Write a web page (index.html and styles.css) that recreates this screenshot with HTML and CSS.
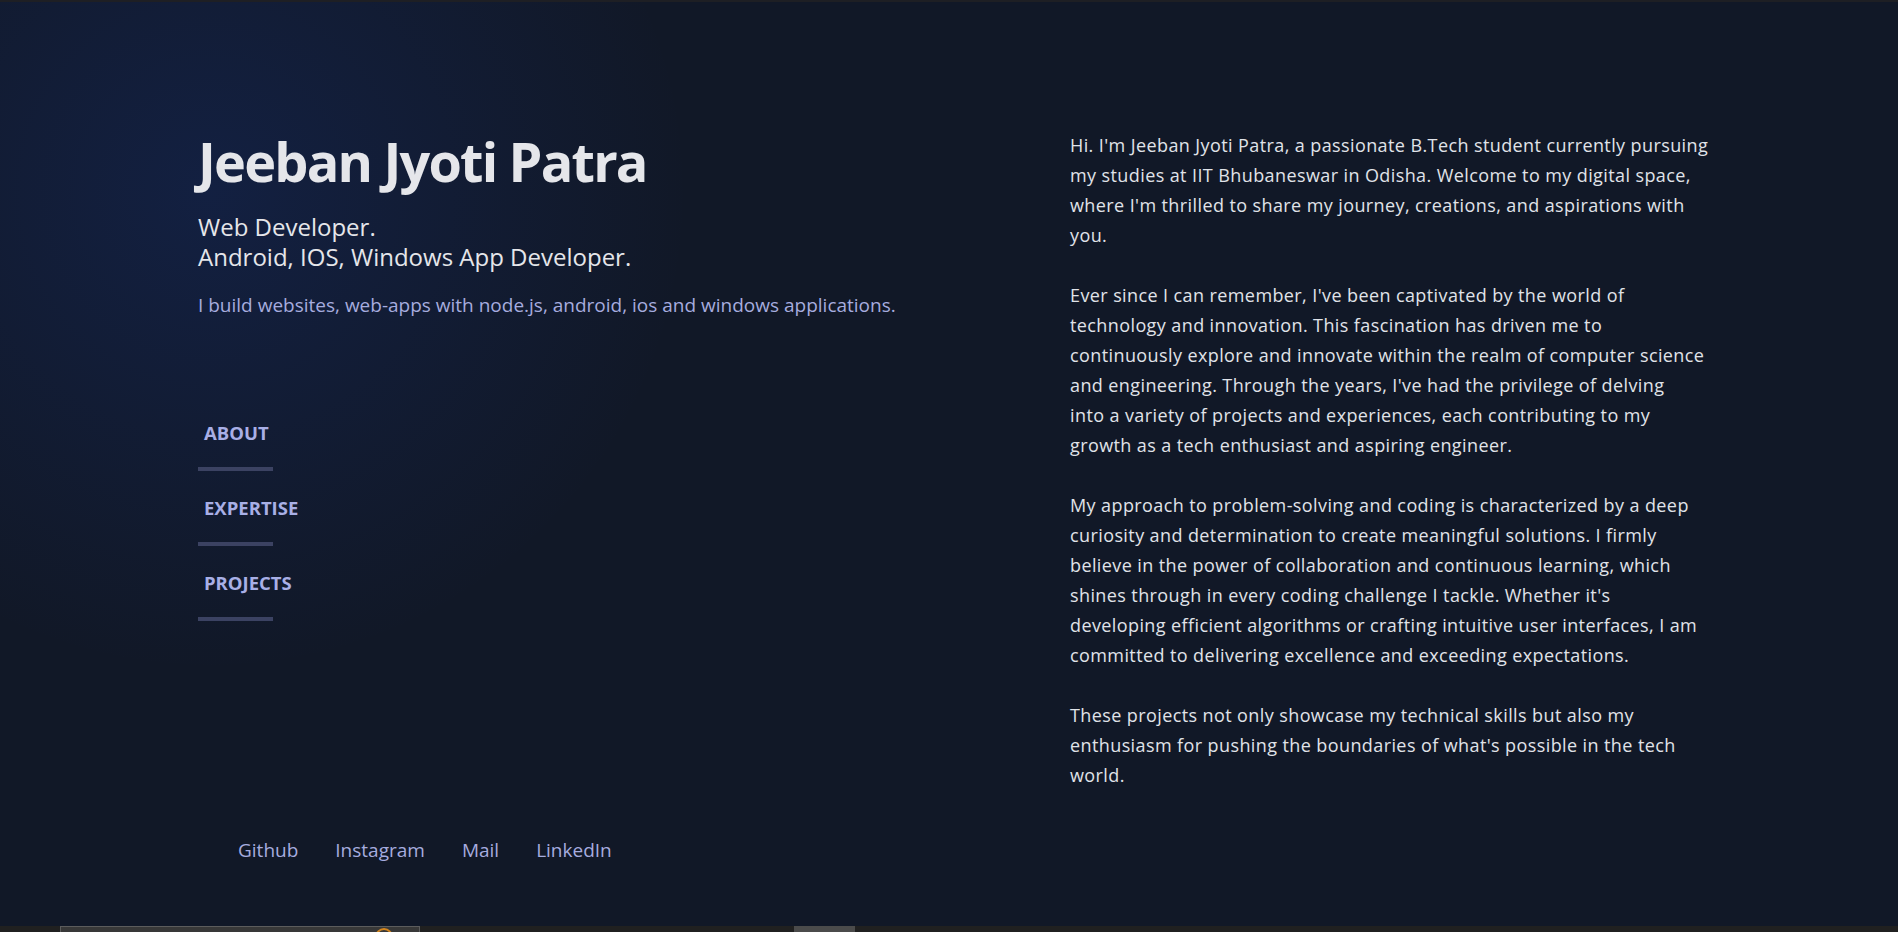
FILE: index.html
```html
<!DOCTYPE html>
<html lang="en">
<head>
<meta charset="utf-8">
<title>Jeeban Jyoti Patra</title>
<link rel="stylesheet" href="styles.css">
</head>
<body>
<div class="frame-top"></div>
<div class="page">
  <header class="intro">
    <h1 class="name">Jeeban Jyoti Patra</h1>
    <h2 class="role">Web Developer.<br>Android, IOS, Windows App Developer.</h2>
    <p class="tagline">I build websites, web-apps with node.js, android, ios and windows applications.</p>
    <nav class="nav">
      <ul>
        <li><a href="#about">ABOUT</a></li>
        <li><a href="#expertise">EXPERTISE</a></li>
        <li><a href="#projects">PROJECTS</a></li>
      </ul>
    </nav>
    <ul class="socials">
      <li><a href="#">Github</a></li>
      <li><a href="#">Instagram</a></li>
      <li><a href="#">Mail</a></li>
      <li><a href="#">LinkedIn</a></li>
    </ul>
  </header>
  <main class="about" id="about">
    <p>Hi. I'm Jeeban Jyoti Patra, a passionate B.Tech student currently pursuing<br>my studies at IIT Bhubaneswar in Odisha. Welcome to my digital space,<br>where I'm thrilled to share my journey, creations, and aspirations with<br>you.</p>
    <p>Ever since I can remember, I've been captivated by the world of<br>technology and innovation. This fascination has driven me to<br>continuously explore and innovate within the realm of computer science<br>and engineering. Through the years, I've had the privilege of delving<br>into a variety of projects and experiences, each contributing to my<br>growth as a tech enthusiast and aspiring engineer.</p>
    <p>My approach to problem-solving and coding is characterized by a deep<br>curiosity and determination to create meaningful solutions. I firmly<br>believe in the power of collaboration and continuous learning, which<br>shines through in every coding challenge I tackle. Whether it's<br>developing efficient algorithms or crafting intuitive user interfaces, I am<br>committed to delivering excellence and exceeding expectations.</p>
    <p>These projects not only showcase my technical skills but also my<br>enthusiasm for pushing the boundaries of what's possible in the tech<br>world.</p>
  </main>
</div>
<div class="taskbar">
  <div class="task-search"><span class="task-ring"></span></div>
  <div class="task-app"></div>
</div>
</body>
</html>
```
FILE: styles.css
```css
html, body {
  margin: 0;
  height: 932px;
  overflow: hidden;
}

body {
  display: flex;
  flex-direction: column;
  background: #111827;
  font-family: "Open Sans", "Noto Sans", sans-serif;
}

.frame-top {
  flex: none;
  height: 2px;
  background: #1e1f24;
}

.page {
  flex: 1;
  min-height: 0;
  display: flex;
  padding: 126px 0 64px 198px;
  background:
    radial-gradient(600px circle at 210px 190px, rgba(29, 78, 216, 0.15), transparent 80%),
    #111827;
}

.intro {
  flex: none;
  width: 872px;
  display: flex;
  flex-direction: column;
}

.name {
  margin: 0;
  font-size: 54px;
  line-height: 66px;
  font-weight: 700;
  letter-spacing: -1.8px;
  color: #e5e6ea;
}

.role {
  margin: 18px 0 0;
  font-size: 24px;
  line-height: 30px;
  font-weight: 400;
  color: #e5e6ea;
}

.tagline {
  margin: 19px 0 0;
  font-size: 19px;
  line-height: 28px;
  color: #a6acdf;
}

.nav ul {
  list-style: none;
  margin: 102px 0 0;
  padding: 0;
}

.nav li {
  display: flex;
  flex-direction: column;
  margin-bottom: 25px;
}

.nav li::after {
  content: "";
  width: 75px;
  height: 4px;
  margin-top: 22px;
  background: #3b4262;
}

.nav a {
  padding-left: 6px;
  font-size: 18.5px;
  line-height: 24px;
  font-weight: 700;
  color: #a8afe6;
  text-decoration: none;
}

.socials {
  display: flex;
  gap: 37px;
  list-style: none;
  margin: auto 0 0;
  padding-left: 40px;
}

.socials a {
  font-size: 19px;
  line-height: 24px;
  color: #a6acdf;
  text-decoration: none;
}

.about {
  flex: none;
  width: 700px;
  padding-top: 2px;
  font-size: 18px;
  line-height: 30px;
  letter-spacing: 0.4px;
  color: #e0e3e9;
}

.about p {
  margin: 0 0 30px;
  white-space: nowrap;
}

.taskbar {
  flex: none;
  height: 6px;
  display: flex;
  background: #202020;
}

.task-search {
  display: flex;
  overflow: hidden;
  margin-left: 60px;
  width: 358px;
  border: 1px solid #5c5c5c;
  border-bottom: none;
  background: #383838;
}

.task-ring {
  flex: none;
  width: 14px;
  height: 14px;
  margin: 1px 0 0 314px;
  border: 2px solid #d4861f;
  border-radius: 50%;
}

.task-app {
  width: 61px;
  margin-left: 374px;
  background: #4b4b4b;
}
```
